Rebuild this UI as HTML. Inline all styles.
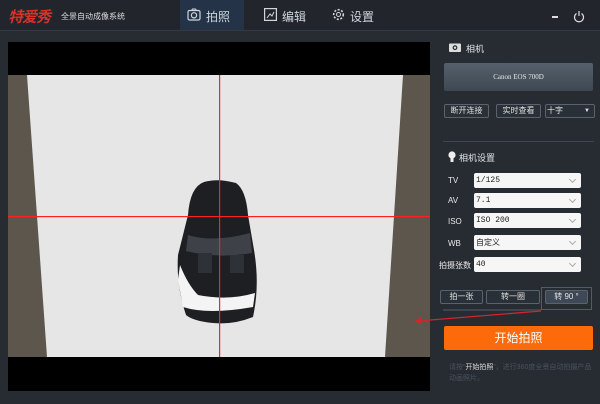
<!DOCTYPE html>
<html><head><meta charset="utf-8"><style>
*{margin:0;padding:0;box-sizing:border-box}
body{width:600px;height:404px;background:#272c33;font-family:"Liberation Sans","Noto Sans CJK SC",sans-serif;position:relative;overflow:hidden;color:#dfe3e8}
.a{position:absolute}
.top{left:0;top:0;width:600px;height:31px;background:#22262c;border-bottom:1px solid #333a43}
.lbl{font-size:8px;color:#e8e8e8}
.fld{position:absolute;left:474px;width:107px;height:15px;background:#f6f6f6;border-radius:2px;color:#222;font-size:8px;padding-left:2px;line-height:15px;font-family:"Liberation Mono","Noto Sans CJK SC",monospace}
.fld:after{content:"";position:absolute;right:6px;top:4px;width:4px;height:4px;border-right:1px solid #aaa;border-bottom:1px solid #aaa;transform:rotate(45deg)}
.btn{position:absolute;height:14px;border:1px solid #5a6270;border-radius:2px;font-size:8px;text-align:center;line-height:12px;color:#e0e0e0;background:#2a3038}
</style></head><body>
<div class="a top"></div>
<div class="a" style="left:8px;top:6px;font-size:15px;font-style:italic;font-weight:bold;color:#d8322a;letter-spacing:-1px">特爱秀</div>
<div class="a" style="left:61px;top:11px;font-size:8px;color:#ddd">全景自动成像系统</div>
<div class="a" style="left:180px;top:0;width:64px;height:30px;background:#243347"></div>
<svg class="a" style="left:187px;top:8px" width="14" height="13" viewBox="0 0 14 13"><rect x="1" y="2.5" width="12" height="9.5" rx="1.5" fill="none" stroke="#cfd6de" stroke-width="1.2"/><circle cx="7" cy="7.3" r="2.6" fill="none" stroke="#cfd6de" stroke-width="1.2"/><path d="M4.5 2.5 L5.5 1 H8.5 L9.5 2.5" fill="none" stroke="#cfd6de"/></svg>
<div class="a" style="left:206px;top:8px;font-size:12px;color:#cfd6de">拍照</div>
<svg class="a" style="left:264px;top:8px" width="13" height="13" viewBox="0 0 13 13"><rect x="0.6" y="0.6" width="11.8" height="11.8" fill="none" stroke="#cfd6de" stroke-width="1.2"/><path d="M3 10 L6 6 L8 8 L10 4" fill="none" stroke="#cfd6de"/></svg>
<div class="a" style="left:282px;top:8px;font-size:12px;color:#cfd6de">编辑</div>
<svg class="a" style="left:331px;top:7px" width="15" height="15" viewBox="0 0 15 15"><circle cx="7.5" cy="7.5" r="4.8" fill="none" stroke="#cfd6de" stroke-width="1.6" stroke-dasharray="2 1.6"/><circle cx="7.5" cy="7.5" r="2" fill="none" stroke="#cfd6de"/></svg>
<div class="a" style="left:350px;top:8px;font-size:12px;color:#cfd6de">设置</div>
<div class="a" style="left:552px;top:16px;width:6px;height:2px;background:#ddd"></div>
<svg class="a" style="left:573px;top:10px" width="12" height="13" viewBox="0 0 12 13"><path d="M3.5 3.5 A4.5 4.5 0 1 0 8.5 3.5" fill="none" stroke="#ddd" stroke-width="1.2"/><path d="M6 1 V6" stroke="#ddd" stroke-width="1.2"/></svg>

<div class="a" style="left:8px;top:42px;width:422px;height:349px;background:#000"></div>
<svg class="a" style="left:8px;top:75px" width="422" height="282" viewBox="0 0 422 282">
<rect width="422" height="282" fill="#5d564c"/>
<polygon points="19,0 395,0 377,282 39,282" fill="#e6e6e6"/>
<path d="M180 140 Q182 112 196 107 Q210 103 228 108 Q238 115 240 140 L246 175 Q252 210 245 242 Q225 250 205 248 Q185 246 178 240 Q168 210 170 180 Z" fill="#1d1f22"/>
<path d="M172 190 L170 205 L175 232 Q200 240 245 232 L247 218 Q220 226 190 220 Q180 210 172 190 Z" fill="#f4f4f4"/>
<path d="M180 160 Q205 168 242 158 L244 178 Q210 184 178 176 Z" fill="#3e4248"/>
<path d="M190 178 h14 v20 h-14z M222 180 h14 v18 h-14z" fill="#2e3238"/>
<rect x="211" y="0" width="1.2" height="282" fill="#ff2020"/>
<rect x="0" y="141" width="422" height="1.2" fill="#ff2020"/>
</svg>

<svg class="a" style="left:449px;top:42px" width="12" height="10" viewBox="0 0 12 10"><rect x="0" y="1.5" width="12" height="8.5" rx="1" fill="#ddd"/><circle cx="6" cy="5.7" r="2.4" fill="#272c33"/><circle cx="6" cy="5.7" r="1.2" fill="#ddd"/></svg>
<div class="a" style="left:466px;top:42px;font-size:9px">相机</div>
<div class="a" style="left:444px;top:63px;width:149px;height:28px;background:linear-gradient(#55606c,#3e4852);border-radius:2px;font-family:'Liberation Serif',serif;font-size:7px;text-align:center;line-height:28px;color:#e8e8e8">Canon EOS 700D</div>
<div class="btn" style="left:444px;top:104px;width:45px">断开连接</div>
<div class="btn" style="left:496px;top:104px;width:45px">实时查看</div>
<div class="btn" style="left:545px;top:104px;width:50px;text-align:left;padding-left:1px">十字<span style="position:absolute;right:4px;font-size:6px">▼</span></div>
<div class="a" style="left:443px;top:141px;width:151px;height:1px;background:#3d4550"></div>
<svg class="a" style="left:448px;top:151px" width="8" height="12" viewBox="0 0 8 12"><circle cx="4" cy="4" r="3.6" fill="#eee"/><rect x="2.5" y="7" width="3" height="4" fill="#eee"/></svg>
<div class="a" style="left:459px;top:151px;font-size:9px">相机设置</div>
<div class="a lbl" style="left:448px;top:176px">TV</div><div class="fld" style="top:173px">1/125</div>
<div class="a lbl" style="left:448px;top:196px">AV</div><div class="fld" style="top:193px">7.1</div>
<div class="a lbl" style="left:448px;top:217px">ISO</div><div class="fld" style="top:213px">ISO 200</div>
<div class="a lbl" style="left:448px;top:239px">WB</div><div class="fld" style="top:235px;font-family:'Noto Sans CJK SC',sans-serif">自定义</div>
<div class="a lbl" style="left:439px;top:260px">拍摄张数</div><div class="fld" style="top:257px">40</div>
<div class="btn" style="left:440px;top:290px;width:43px">拍一张</div>
<div class="btn" style="left:486px;top:290px;width:54px">转一圈</div>
<div class="btn" style="left:545px;top:290px;width:43px;background:#3e4856">转 90 °</div>
<div class="a" style="left:541px;top:287px;width:51px;height:23px;border:1px solid #d0262c"></div>
<div class="a" style="left:443px;top:309px;width:98px;height:2px;background:#3d4550"></div>
<svg class="a" style="left:410px;top:306px" width="135" height="20"><path d="M131 5 L8 15" stroke="#d0262c" stroke-width="1.3"/><path d="M4 15.3 L11 11.5 L11.5 18 Z" fill="#d0262c"/></svg>
<div class="a" style="left:444px;top:326px;width:149px;height:24px;background:#fd6a0a;border-radius:2px;text-align:center;line-height:24px;font-size:12px;color:#fff">开始拍照</div>
<div class="a" style="left:449px;top:362px;width:145px;font-size:7px;line-height:11px;color:#4a525c">请按“<span style="color:#ddd">开始拍照</span>”，进行360度全景自动拍摄产品动画照片。</div>
</body></html>
